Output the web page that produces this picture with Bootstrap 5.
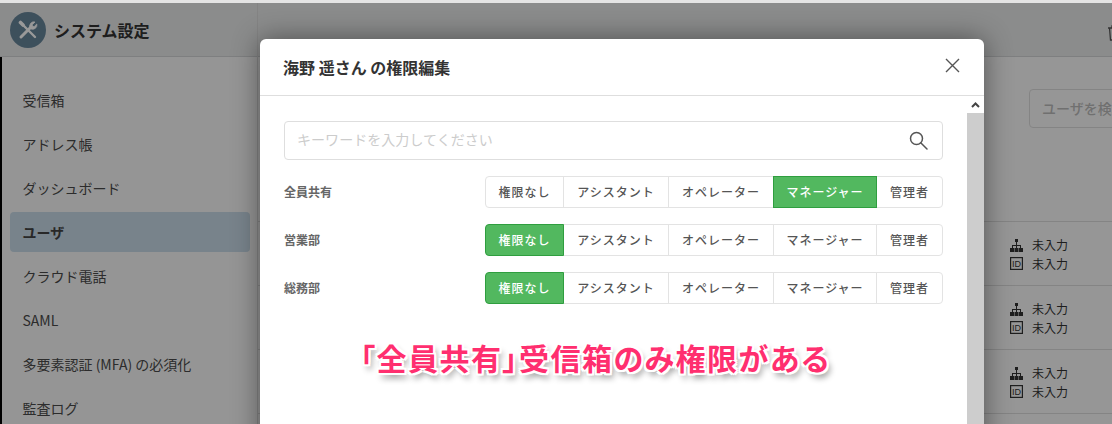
<!DOCTYPE html>
<html lang="ja">
<head>
<meta charset="utf-8">
<title>権限編集</title>
<link href="https://cdn.jsdelivr.net/npm/bootstrap@5.3.0/dist/css/bootstrap.min.css" rel="stylesheet">
<style>
html,body{height:424px;overflow:hidden;background:#e4e4e4}
body{font-family:"Noto Sans CJK JP","Noto Sans",sans-serif;padding-top:3px}
.app-shell{position:relative;height:421px;overflow:hidden;background:#fbfbfb;display:flex;color:#333}
.dim-layer{position:absolute;inset:0;background:rgba(0,0,0,.4);z-index:5}
.side-pane{width:258px;flex:none;border-right:1px solid #dcdcdc;background:#f9f9f9}
.side-head{height:54px;background:#e8e9ea;border-bottom:1px solid #d2d4d6;padding-left:10px;gap:8px}
.side-title{font-size:16px;font-weight:700;color:#333}
.logo-disc{width:36px;height:36px;border-radius:50%;background:#66859a;display:flex;align-items:center;justify-content:center}
.side-list{border-left:2px solid #000;padding:23px 7px 0 8px;height:367px}
.side-item{height:40px;margin-bottom:4px;padding-left:12.500px;border-radius:4px;font-size:14px;color:#4a4a4a;display:flex;align-items:center}
.side-item.is-on{background:#c8dbe8;font-weight:700;color:#444}
.main-pane{flex:1;min-width:0}
.main-head{height:54px;background:#e8e9ea;border-bottom:1px solid #d2d4d6;padding-left:849px;padding-top:15px}
.find-box{margin:32px 0 0 771px;width:200px;height:39px;border:1px solid #ddd;border-radius:4px;font-size:14px;color:#bbb;padding:0 12px;display:flex;align-items:center;white-space:nowrap;font-weight:500}
.user-table{margin-top:93px}
.user-row{height:64px;border-top:1px solid #ddd;padding:14px 0 0 752px;font-size:12px;color:#333}
.user-row>div{height:18.500px;gap:9px}
.user-row svg{width:13px;height:13px;flex:none}
.edit-dialog{position:absolute;z-index:10;left:260px;top:36px;width:724px;height:500px;background:#fff;border-radius:6px;box-shadow:0 0 28px rgba(0,0,0,.45);display:flex;flex-direction:column}
.edit-head{height:57px;border-bottom:1px solid #dedede;padding:0 24px;flex:none}
.edit-title{font-size:16px;font-weight:700;color:#333;margin:0 0 0 -1px;padding-top:2px}
.x-mark{margin-bottom:3px}
.edit-body{flex:1;min-height:0}
.edit-inner{flex:1;padding:25px 24px 0}
.bar-track{width:17px;flex:none;background:#cdcdcd}
.bar-top{height:17px;background:#fff;display:flex;align-items:center;justify-content:center}
.key-box{height:39px;border:1px solid #dedede;border-radius:4px;padding:0 14px 0 12px;margin-bottom:16px}
.key-box .form-control{border:0;padding:0 0 3px;box-shadow:none;font-size:14px;letter-spacing:.05px;height:36px;background:transparent}
.key-box .form-control::placeholder{color:#ccc}
.perm-row{height:32px;margin-bottom:16px}
.perm-label{font-size:12px;font-weight:700;color:#666}
.perm-group .btn{height:32px;padding:0;font-size:12px;letter-spacing:1px;color:#555;background:#fff;border-color:#e3e3e3;border-radius:4px;font-weight:500;white-space:nowrap;display:flex;align-items:center;justify-content:center}
.perm-group .btn.is-picked{background:#52b85f;border-color:#2f9e3f;color:#fff;z-index:2}
.w-a{width:79px}.w-b{width:106px}.w-c{width:106px}.w-d{width:104px}.w-e{width:67px}
.call-out{position:absolute;z-index:20;left:360px;top:334px;font-size:30px;line-height:40px;font-weight:700;font-feature-settings:"palt";letter-spacing:1.500px;color:#ff2f6f;white-space:nowrap;text-shadow:-2px 0 0 #fff,2px 0 0 #fff,0 -2px 0 #fff,0 2px 0 #fff,-2px -2px 0 #fff,2px -2px 0 #fff,-2px 2px 0 #fff,2px 2px 0 #fff,3px 5px 6px rgba(0,0,0,.45)}
</style>
</head>
<body>
<div class="app-shell">
  <aside class="side-pane">
    <div class="side-head d-flex align-items-center">
      <span class="logo-disc">
        <svg width="20" height="20" viewBox="0 0 20 20" fill="none" stroke="#fff" stroke-linecap="round">
          <path d="M3 17 13 7" stroke-width="3"/>
          <path d="M12 8a4.300 4.300 0 0 1 5-6l-2.800 2.800.4 1.500 1.500.4L18.800 4a4.300 4.300 0 0 1-5.800 5z" fill="#fff" stroke-width=".8"/>
          <path d="M4 4l13 13" stroke-width="2.400"/>
          <path d="M2.500 2.500 5 5" stroke-width="3.600"/>
        </svg>
      </span>
      <span class="side-title">システム設定</span>
    </div>
    <nav class="side-list">
      <div class="side-item">受信箱</div>
      <div class="side-item">アドレス帳</div>
      <div class="side-item">ダッシュボード</div>
      <div class="side-item is-on">ユーザ</div>
      <div class="side-item">クラウド電話</div>
      <div class="side-item">SAML</div>
      <div class="side-item">多要素認証 (MFA) の必須化</div>
      <div class="side-item">監査ログ</div>
    </nav>
  </aside>
  <main class="main-pane">
    <div class="main-head">
      <svg width="14" height="16" viewBox="0 0 14 16" fill="none" stroke="#555" stroke-width="1.300"><path d="M1 3h12M2.500 3l1 12h7l1-12M5 3V1h4v2"/></svg>
    </div>
    <div class="find-box">ユーザを検索</div>
    <div class="user-table">
      <div class="user-row">
        <div class="d-flex align-items-center"><svg viewBox="0 0 13 13" fill="#333"><rect x="5" y="0" width="3" height="3"/><path d="M6 3h1v3h4v3h-1V7H7v2H6V7H3v2H2V6h4z"/><rect x="0" y="9" width="4" height="4"/><rect x="4.500" y="9" width="4" height="4"/><rect x="9" y="9" width="4" height="4"/></svg><span>未入力</span></div>
        <div class="d-flex align-items-center"><svg viewBox="0 0 13 13"><rect x=".6" y=".6" width="11.800" height="11.800" fill="none" stroke="#333" stroke-width="1.200"/><text x="6.500" y="9.800" text-anchor="middle" font-size="9" font-family="Liberation Sans" fill="#333">ID</text></svg><span>未入力</span></div>
      </div>
      <div class="user-row">
        <div class="d-flex align-items-center"><svg viewBox="0 0 13 13" fill="#333"><rect x="5" y="0" width="3" height="3"/><path d="M6 3h1v3h4v3h-1V7H7v2H6V7H3v2H2V6h4z"/><rect x="0" y="9" width="4" height="4"/><rect x="4.500" y="9" width="4" height="4"/><rect x="9" y="9" width="4" height="4"/></svg><span>未入力</span></div>
        <div class="d-flex align-items-center"><svg viewBox="0 0 13 13"><rect x=".6" y=".6" width="11.800" height="11.800" fill="none" stroke="#333" stroke-width="1.200"/><text x="6.500" y="9.800" text-anchor="middle" font-size="9" font-family="Liberation Sans" fill="#333">ID</text></svg><span>未入力</span></div>
      </div>
      <div class="user-row">
        <div class="d-flex align-items-center"><svg viewBox="0 0 13 13" fill="#333"><rect x="5" y="0" width="3" height="3"/><path d="M6 3h1v3h4v3h-1V7H7v2H6V7H3v2H2V6h4z"/><rect x="0" y="9" width="4" height="4"/><rect x="4.500" y="9" width="4" height="4"/><rect x="9" y="9" width="4" height="4"/></svg><span>未入力</span></div>
        <div class="d-flex align-items-center"><svg viewBox="0 0 13 13"><rect x=".6" y=".6" width="11.800" height="11.800" fill="none" stroke="#333" stroke-width="1.200"/><text x="6.500" y="9.800" text-anchor="middle" font-size="9" font-family="Liberation Sans" fill="#333">ID</text></svg><span>未入力</span></div>
      </div>
      <div class="user-row"></div>
    </div>
  </main>
  <div class="dim-layer"></div>
  <section class="edit-dialog">
    <header class="edit-head d-flex align-items-center justify-content-between">
      <h5 class="edit-title">海野 遥さん の権限編集</h5>
      <svg class="x-mark" width="15" height="15" viewBox="0 0 15 15" fill="none" stroke="#555" stroke-width="1.400"><path d="M1 1l13 13M14 1 1 14"/></svg>
    </header>
    <div class="edit-body d-flex">
      <div class="edit-inner">
        <div class="key-box d-flex align-items-center">
          <input class="form-control" type="text" placeholder="キーワードを入力してください">
          <svg width="19" height="19" viewBox="0 0 19 19" fill="none" stroke="#555" stroke-width="1.500" class="flex-shrink-0"><circle cx="7.500" cy="7.500" r="6"/><path d="M12 12l6 6" stroke-linecap="round"/></svg>
        </div>
        <div class="perm-row d-flex align-items-center justify-content-between">
          <span class="perm-label">全員共有</span>
          <div class="btn-group perm-group">
            <button class="btn w-a">権限なし</button><button class="btn w-b">アシスタント</button><button class="btn w-c">オペレーター</button><button class="btn w-d is-picked">マネージャー</button><button class="btn w-e">管理者</button>
          </div>
        </div>
        <div class="perm-row d-flex align-items-center justify-content-between">
          <span class="perm-label">営業部</span>
          <div class="btn-group perm-group">
            <button class="btn w-a is-picked">権限なし</button><button class="btn w-b">アシスタント</button><button class="btn w-c">オペレーター</button><button class="btn w-d">マネージャー</button><button class="btn w-e">管理者</button>
          </div>
        </div>
        <div class="perm-row d-flex align-items-center justify-content-between">
          <span class="perm-label">総務部</span>
          <div class="btn-group perm-group">
            <button class="btn w-a is-picked">権限なし</button><button class="btn w-b">アシスタント</button><button class="btn w-c">オペレーター</button><button class="btn w-d">マネージャー</button><button class="btn w-e">管理者</button>
          </div>
        </div>
      </div>
      <div class="bar-track">
        <div class="bar-top"><svg width="9" height="6" viewBox="0 0 9 6" fill="none" stroke="#444" stroke-width="2"><path d="M1 5l3.500-3.500L8 5"/></svg></div>
      </div>
    </div>
  </section>
  <div class="call-out">「全員共有」受信箱のみ権限がある</div>
</div>
<script src="https://cdn.jsdelivr.net/npm/bootstrap@5.3.0/dist/js/bootstrap.bundle.min.js"></script>
</body>
</html>
